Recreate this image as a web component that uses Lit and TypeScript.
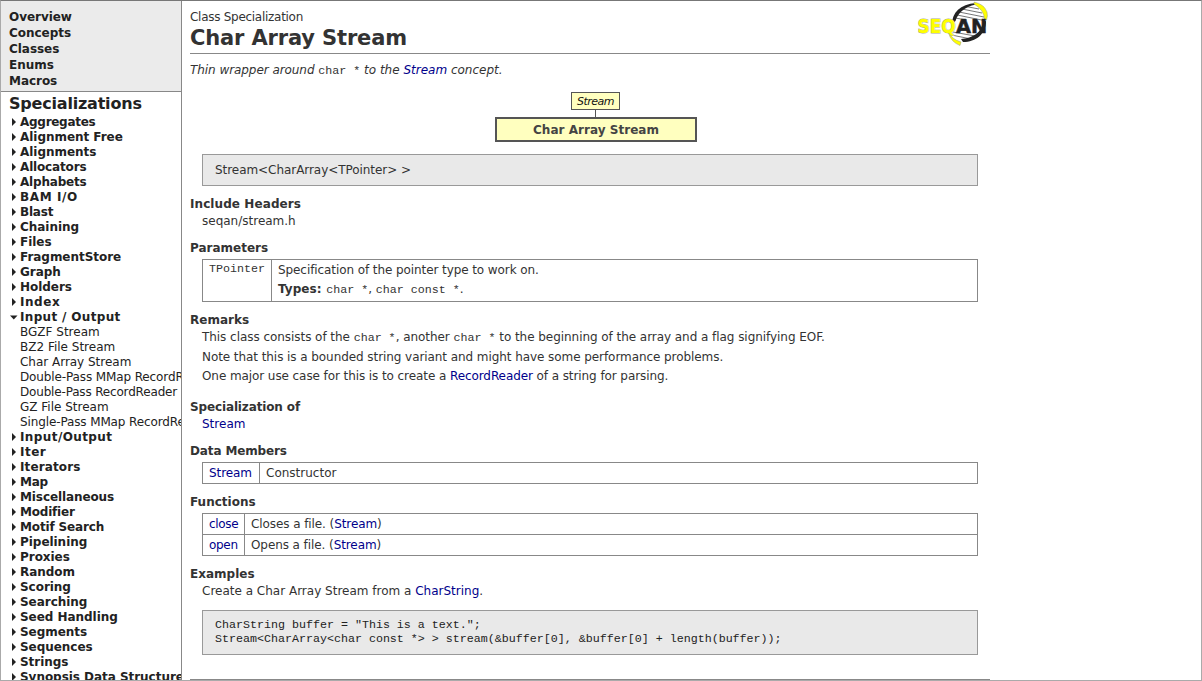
import { LitElement, html, css, svg } from "lit";
import { styleMap } from "lit/directives/style-map.js";

const TOP_LINKS = ["Overview", "Concepts", "Classes", "Enums", "Macros"];

interface Entry {
  name: string;
  track?: number;
}

interface Category extends Entry {
  children?: Entry[];
}

const named = (...names: string[]): Category[] => names.map((name) => ({ name }));

const CATEGORIES: Category[] = [
  { name: "Aggregates", track: -0.28 },
  ...named("Alignment Free", "Alignments"),
  { name: "Allocators", track: -0.16 },
  { name: "Alphabets", track: -0.2 },
  { name: "BAM I/O", track: 0.6 },
  { name: "Blast", track: -0.2 },
  ...named("Chaining", "Files", "FragmentStore", "Graph", "Holders"),
  { name: "Index", track: 0.55 },
  {
    name: "Input / Output",
    track: 0.33,
    children: [
      { name: "BGZF Stream", track: 0 },
      { name: "BZ2 File Stream", track: 0 },
      { name: "Char Array Stream", track: -0.02 },
      { name: "Double-Pass MMap RecordReader" },
      { name: "Double-Pass RecordReader", track: -0.17 },
      { name: "GZ File Stream", track: 0 },
      { name: "Single-Pass MMap RecordReader" },
    ],
  },
  { name: "Input/Output", track: 0.4 },
  { name: "Iter", track: 0.5 },
  { name: "Iterators", track: 0.12 },
  { name: "Map", track: -0.3 },
  { name: "Miscellaneous", track: -0.1 },
  { name: "Modifier", track: -0.2 },
  { name: "Motif Search", track: -0.15 },
  ...named("Pipelining", "Proxies", "Random", "Scoring", "Searching", "Seed Handling", "Segments", "Sequences",
    "Strings", "Synopsis Data Structures"),
];

const tracking = (e: Entry) => styleMap(e.track === undefined ? {} : { letterSpacing: `${e.track}px` });

class SeqanLogo extends LitElement {
  static styles = css`
    :host { display: block; width: 72px; height: 46px; }
    svg { display: block; }
    .word { font: bold 19px "DejaVu Sans", sans-serif; paint-order: stroke; }
  `;

  render() {
    return html`<svg width="72" height="46" viewBox="0 0 72 46">
      <path d="M36 21C38 11 45 5 58 3C66 8 69 15 68 22C65 34 57 38 45 39C38 36 35 30 36 21Z" fill="#fff"></path>
      <g fill="none" stroke="#777" stroke-width="1">
        <path d="M49 5.5L62 8M45 8L65 12M42 11L67 16M40 14L67 19.500M38 17L50 19M36 31L61 35.500M37 34.500L54 38"></path>
      </g>
      <path d="M35 23C35 12 43 3 59 2L59 3.500C47 6 41 12 38.500 20Z" fill="#222"></path>
      <path d="M44 38C56 37 64 32 66.500 21L69 20C69 33 59 41 46 41Z" fill="#222"></path>
      <path d="M57 1Q67 3 70 11Q71 15 69.500 19L67.500 18Q67 9 57 3Z" fill="#ff0" stroke="#998" stroke-width=".5"></path>
      <path d="M32 31Q34 38 44 41L43 44.500Q34 41 31.500 32Z" fill="#ff0" stroke="#998" stroke-width=".5"></path>
      <text class="word" x="0.500" y="32.300" textLength="38" lengthAdjust="spacingAndGlyphs" fill="#ff0"
        stroke="#aa9" stroke-width="1">SEQ</text>
      <text class="word" x="39" y="32.300" textLength="31" lengthAdjust="spacingAndGlyphs" fill="#222"
        stroke="#222" stroke-width=".5">AN</text>
    </svg>`;
  }
}
customElements.define("seqan-logo", SeqanLogo);

class DocSidebar extends LitElement {
  static styles = css`
    :host {
      display: flex; flex-direction: column; box-sizing: border-box; width: 181px; height: 679px;
      border-right: 1px solid #888; overflow: hidden; white-space: nowrap; color: #222;
      font: bold 12px/15px "DejaVu Sans", sans-serif; letter-spacing: -0.04px;
    }
    .top { flex: none; box-sizing: border-box; height: 91px; padding: 8px 0 0 8px; line-height: 16px;
      background: #ebebeb; border-bottom: 1px solid #888; }
    .title { flex: none; padding: 2px 0 1px 8px; font-size: 16px; line-height: 20px; letter-spacing: -0.2px; }
    .row { flex: none; display: flex; align-items: center; height: 15px; padding-left: 10px; overflow: hidden; }
    .arrow { flex: none; width: 9px; height: 9px; fill: #222; overflow: visible; }
    .child { flex: none; height: 15px; padding-left: 19px; font-weight: normal; letter-spacing: -0.12px;
      overflow: hidden; }
  `;

  render() {
    return html`
      <div class="top">${TOP_LINKS.map((t) => html`<div>${t}</div>`)}</div>
      <div class="title">Specializations</div>
      ${CATEGORIES.map((c) => html`
        <div class="row" style=${tracking(c)}>
          <svg class="arrow" viewBox="0 0 9 9">
            ${c.children ? svg`<path d="M-1 2.5H6.500L2.800 6.500Z"></path>` : svg`<path d="M1 0V8L5 4Z"></path>`}
          </svg>${c.name}
        </div>
        ${(c.children ?? []).map((n) => html`<div class="child" style=${tracking(n)}>${n.name}</div>`)}`)}
    `;
  }
}
customElements.define("doc-sidebar", DocSidebar);

class DocPage extends LitElement {
  static styles = css`
    :host { display: block; width: 800px; height: 679px; margin-left: 8px; overflow: hidden; color: #333;
      font: 12px/16px "DejaVu Sans", sans-serif; letter-spacing: -0.084px; white-space: nowrap; }
    .head { display: flex; justify-content: space-between; height: 52px; border-bottom: 1px solid #888; }
    .kind { padding-top: 8px; letter-spacing: -0.28px; }
    .title { font-weight: bold; font-size: 21px; line-height: 27px; letter-spacing: -0.15px; }
    .logo { margin-right: 1px; }
    .link { color: #00008b; }
    .mono { font: 11.66px/14px "Liberation Mono", monospace; letter-spacing: 0; }
    .lead { margin-top: 8px; font-style: italic; letter-spacing: 0; }
    .lead .start { letter-spacing: -0.06px; }
    .lead .mono { font-style: normal; }
    .tree { display: flex; flex-direction: column; align-items: center; margin: 14px 0 12px; padding-left: 12px; }
    .parent { box-sizing: border-box; width: 49px; height: 18px; border: 1px solid #555; background: #ffffbf;
      color: #111; font-style: italic; font-size: 11px; line-height: 17px; letter-spacing: -0.5px;
      text-align: center; margin-left: -1px; }
    .stem { width: 1px; height: 7px; background: #555; margin-left: -1px; }
    .self { box-sizing: border-box; width: 202px; height: 25px; border: 2px solid #555;
      background: #ffffbf; color: #444; font-weight: bold; line-height: 22px; text-align: center;
      letter-spacing: 0.03px; }
    .box { box-sizing: border-box; margin: 0 12px; padding: 0 12px; border: 1px solid #999; background: #e9e9e9; }
    .signature { height: 32px; line-height: 30px; letter-spacing: -0.053px; }
    .code { height: 45px; margin-top: 11px; padding-top: 7px; white-space: pre; letter-spacing: 0; color: #222; }
    .h { margin-top: 10px; height: 16px; font-weight: bold; letter-spacing: 0; }
    .low { margin-top: 11px; }
    .far { margin-top: 15px; }
    .wide { letter-spacing: 0.083px; }
    .narrow { letter-spacing: -0.134px; }
    .body { margin: 1px 12px 0; }
    .body + .body { margin-top: 3px; }
    .body.second { margin-top: 4px; letter-spacing: -0.07px; }
    .first { letter-spacing: -0.05px; }
    .even { letter-spacing: 0; }
    .table { display: grid; margin: 3px 12px 0; border: 1px solid #888; }
    .cell { padding: 2px 6px; }
    .cell + .cell { border-left: 1px solid #888; }
    .row { display: grid; }
    .row + .row { border-top: 1px solid #888; }
    .params .row { grid-template-columns: 68px 1fr; height: 41px; }
    .members .row { grid-template-columns: 56px 1fr; height: 20px; }
    .functions .row { grid-template-columns: 41px 1fr; height: 20px; }
    .functions .cell.link { letter-spacing: -0.3px; }
    .types { margin-top: 3px; }
    .types b { margin-right: 1px; letter-spacing: 0.05px; }
    .foot { margin-top: 24px; border-top: 1px solid #888; }
  `;

  render() {
    const stream = html`<span class="link">Stream</span>`;
    return html`
      <div class="head">
        <div><div class="kind">Class Specialization</div><div class="title">Char Array Stream</div></div>
        <seqan-logo class="logo"></seqan-logo>
      </div>
      <div class="lead"><span class="start">Thin wrapper around </span><span class="mono">char *</span> to the ${stream} concept.</div>
      <div class="tree">
        <div class="parent">Stream</div><div class="stem"></div><div class="self">Char Array Stream</div>
      </div>
      <div class="box signature">Stream&lt;CharArray&lt;TPointer&gt; &gt;</div>
      <div class="h wide">Include Headers</div>
      <div class="body even">seqan/stream.h</div>
      <div class="h low">Parameters</div>
      <div class="table params"><div class="row">
        <div class="cell mono">TPointer</div>
        <div class="cell">
          <div>Specification of the pointer type to work on.</div>
          <div class="types"><b>Types:</b> <span class="mono">char *</span>, <span class="mono">char const *</span>.</div>
        </div>
      </div></div>
      <div class="h">Remarks</div>
      <div class="body first">This class consists of the <span class="mono">char *</span>, another <span class="mono">char *</span> to the beginning of the array and a flag signifying EOF.</div>
      <div class="body second">Note that this is a bounded string variant and might have some performance problems.</div>
      <div class="body">One major use case for this is to create a <span class="link">RecordReader</span> of a string for parsing.</div>
      <div class="h far narrow">Specialization of</div>
      <div class="body even">${stream}</div>
      <div class="h low narrow">Data Members</div>
      <div class="table members"><div class="row">
        <div class="cell">${stream}</div><div class="cell even">Constructor</div>
      </div></div>
      <div class="h">Functions</div>
      <div class="table functions">
        <div class="row"><div class="cell link">close</div><div class="cell">Closes a file. (${stream})</div></div>
        <div class="row"><div class="cell link">open</div><div class="cell">Opens a file. (${stream})</div></div>
      </div>
      <div class="h">Examples</div>
      <div class="body even">Create a Char Array Stream from a <span class="link">CharString</span>.</div>
      <div class="box code mono">CharString buffer = "This is a text.";
Stream&lt;CharArray&lt;char const *&gt; &gt; stream(&amp;buffer[0], &amp;buffer[0] + length(buffer));</div>
      <div class="foot"></div>
    `;
  }
}
customElements.define("doc-page", DocPage);

class AppRoot extends LitElement {
  static styles = css`
    :host { display: flex; box-sizing: border-box; width: 1202px; height: 681px; overflow: hidden; background: #fff;
      border: 1px solid #aaa; border-top-color: #777; }
  `;

  render() {
    return html`<doc-sidebar></doc-sidebar><doc-page></doc-page>`;
  }
}
customElements.define("app-root", AppRoot);
